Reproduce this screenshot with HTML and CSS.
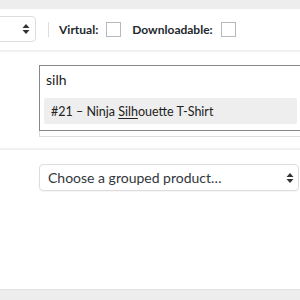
FILE: index.html
```html
<!DOCTYPE html>
<html>
<head>
<meta charset="utf-8">
<link rel="stylesheet" href="styles.css">
</head>
<body>
<div class="page-top"></div>
<div class="panel">
  <div class="type-row">
    <div class="select-cut">
      <span class="arrows"><svg width="8" height="12" viewBox="0 0 8 12"><path d="M4 1 L7.5 5 H0.5 Z M4 11 L7.5 7 H0.5 Z" fill="#333"/></svg></span>
    </div>
    <span class="vsep"></span>
    <label class="opt">Virtual: <span class="cb"></span></label>
    <label class="opt">Downloadable: <span class="cb"></span></label>
  </div>
  <div class="search-row">
    <div class="combo">
      <div class="dropdown">
        <div class="search-input">silh</div>
        <ul class="results">
          <li class="result">#21 – Ninja <u>Silh</u>ouette T-Shirt</li>
        </ul>
      </div>
      <div class="under-field"></div>
    </div>
  </div>
  <div class="group-row">
    <div class="group-select">
      <span>Choose a grouped product…</span>
      <span class="arrows"><svg width="8" height="12" viewBox="0 0 8 12"><path d="M4 1 L7.5 5 H0.5 Z M4 11 L7.5 7 H0.5 Z" fill="#333"/></svg></span>
    </div>
  </div>
</div>
<div class="page-bottom"></div>
</body>
</html>
```

FILE: styles.css
```css
html, body {
  margin: 0;
  padding: 0;
  height: 300px;
  overflow: hidden;
  background: #fff;
  font-family: Lato, "Open Sans", sans-serif;
  color: #32373c;
}
.page-top {
  height: 9px;
  background: #ededed;
}
.panel {
  height: 280px;
  background: #fff;
  display: flex;
  flex-direction: column;
}
.type-row {
  height: 43px;
  border-bottom: 2px solid #f0f0f0;
  display: flex;
  align-items: center;
  box-sizing: border-box;
  padding-bottom: 1px;
}
.select-cut {
  width: 60px;
  height: 26px;
  margin-left: -24px;
  box-sizing: border-box;
  border: 1px solid #ddd;
  border-radius: 4px;
  display: flex;
  align-items: center;
  justify-content: flex-end;
  padding-right: 5px;
}
.arrows {
  display: flex;
  align-items: center;
}
.vsep {
  width: 1px;
  height: 15px;
  background: #ddd;
  margin-left: 12px;
  margin-right: 10px;
}
.opt {
  font-weight: 700;
  font-size: 12px;
  display: flex;
  align-items: center;
  gap: 8px;
  margin-right: 11px;
  color: #23282d;
}
.cb {
  display: inline-block;
  width: 15px;
  height: 15px;
  box-sizing: border-box;
  border: 1px solid #b4b9be;
  background: #fff;
}
.search-row {
  height: 98px;
  box-sizing: border-box;
  border-bottom: 2px solid #f0f0f0;
  padding-top: 13px;
  padding-left: 39px;
}
.combo {
  width: 270px;
}
.dropdown {
  box-sizing: border-box;
  border: 1px solid #888;
  border-right: none;
  background: #fff;
  padding: 0 4px 6px 4px;
  height: 66px;
}
.search-input {
  height: 32px;
  font-size: 14px;
  line-height: 27px;
  padding-left: 2px;
  color: #222;
}
.results {
  list-style: none;
  margin: 0;
  padding: 0;
}
.result {
  background: #eee;
  width: 253px;
  height: 26px;
  line-height: 27px;
  font-size: 12.5px;
  padding-left: 7px;
  box-sizing: border-box;
  color: #222;
  border-radius: 2px;
}
.result u {
  text-decoration-thickness: 1px;
  text-underline-offset: 2px;
}
.under-field {
  height: 5px;
  border-left: 1px solid #ddd;
  border-bottom: 1px solid #ddd;
}
.group-row {
  padding-top: 14px;
  padding-left: 39px;
  flex: 1;
}
.group-select {
  width: 260px;
  height: 27px;
  box-sizing: border-box;
  border: 1px solid #ddd;
  border-radius: 4px;
  display: flex;
  align-items: center;
  justify-content: space-between;
  padding: 0 4px 0 8px;
  font-size: 14px;
  color: #32373c;
  box-shadow: 0 1px 1px rgba(0,0,0,0.04);
}
.page-bottom {
  height: 11px;
  background: #ededed;
  border-top: 1px solid #e2e2e2;
}
```
